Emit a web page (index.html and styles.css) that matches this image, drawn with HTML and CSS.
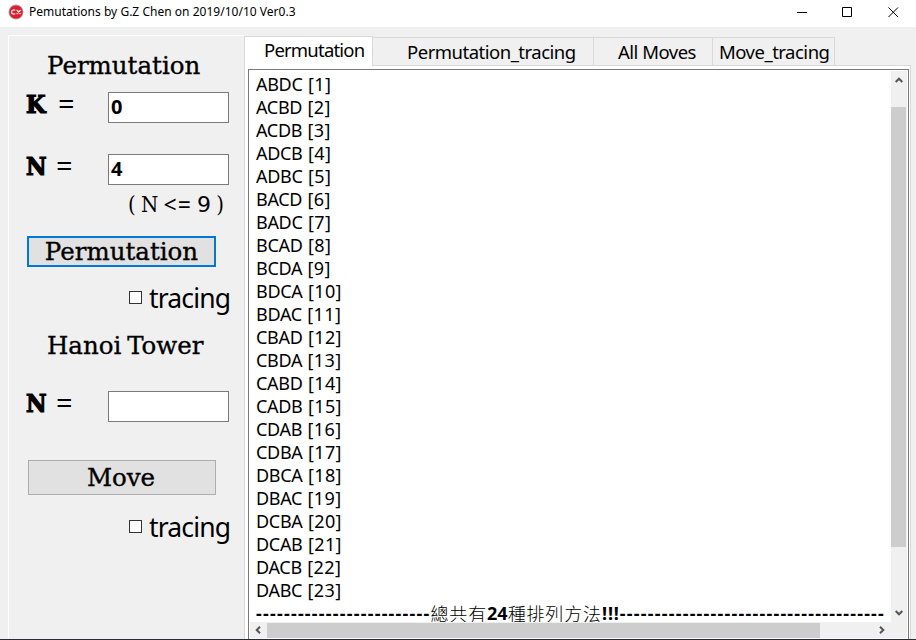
FILE: index.html
```html
<!DOCTYPE html>
<html lang="en">
<head>
<meta charset="utf-8">
<title>Pemutations</title>
<link rel="stylesheet" href="styles.css">
</head>
<body>
<div class="window">
  <header class="titlebar">
    <svg class="logo" width="16" height="16" viewBox="0 0 16 16"><circle cx="8" cy="8" r="7.5" fill="#a9a2a2"/><circle cx="8" cy="8" r="6.6" fill="#df1f2c"/><path d="M7.2 6.4C6.2 5.5 3.6 5.7 3.6 8s2.600 2.500 3.600 1.600M8.700 5.900l4 4.200M12.700 5.900l-4 4.200" fill="none" stroke="#fff" stroke-width="1.200"/></svg>
    <span class="caption">Pemutations by G.Z Chen on 2019/10/10 Ver0.3</span>
    <div class="controls">
      <svg width="11" height="11" viewBox="0 0 11 11"><path d="M1 5.500h10"/></svg>
      <svg width="11" height="11" viewBox="0 0 11 11"><path d="M.5.500h9v9h-9z"/></svg>
      <svg width="11" height="11" viewBox="0 0 11 11"><path d="M.5.500l9.500 9.500M10 .500l-9.500 9.500"/></svg>
    </div>
  </header>
  <main class="client">
    <section class="side">
      <h2 class="script heading">Permutation</h2>
      <label class="field k"><b>K</b><i>=</i><input type="text" value="0"></label>
      <label class="field n"><b>N</b><i>=</i><input type="text" value="4"></label>
      <p class="hint"><span>(</span><span class="hn">N</span><span class="le">&lt;=</span><span class="nine">9</span><span>)</span></p>
      <button class="btn primary"><span class="script">Permutation</span></button>
      <label class="check first"><span class="box"></span><span class="word">tracing</span></label>
      <h2 class="script heading hanoi">Hanoi Tower</h2>
      <label class="field n hn-field"><b>N</b><i>=</i><input type="text"></label>
      <button class="btn move"><span class="script">Move</span></button>
      <label class="check second"><span class="box"></span><span class="word">tracing</span></label>
    </section>
    <section class="tabs">
      <nav class="tabbar">
        <div class="tab active"><span>Permutation</span></div>
        <div class="tab t2"><span>Permutation_tracing</span></div>
        <div class="tab t3"><span>All Moves</span></div>
        <div class="tab t4"><span>Move_tracing</span></div>
      </nav>
      <div class="panel">
        <div class="memo">
          <div class="view">
            <ul class="lines">
              <li>ABDC <span>[1]</span></li><li>ACBD <span>[2]</span></li><li>ACDB <span>[3]</span></li><li>ADCB <span>[4]</span></li>
              <li>ADBC <span>[5]</span></li><li>BACD <span>[6]</span></li><li>BADC <span>[7]</span></li><li>BCAD <span>[8]</span></li>
              <li>BCDA <span>[9]</span></li><li>BDCA <span>[10]</span></li><li>BDAC <span>[11]</span></li><li>CBAD <span>[12]</span></li>
              <li>CBDA <span>[13]</span></li><li>CABD <span>[14]</span></li><li>CADB <span>[15]</span></li><li>CDAB <span>[16]</span></li>
              <li>CDBA <span>[17]</span></li><li>DBCA <span>[18]</span></li><li>DBAC <span>[19]</span></li><li>DCBA <span>[20]</span></li>
              <li>DCAB <span>[21]</span></li><li>DACB <span>[22]</span></li><li>DABC <span>[23]</span></li>
              <li class="total"><span class="dash">-------------------------</span><span class="cjk">總共有</span><b>24</b><span class="cjk">種排列方法</span><b class="bang">!!!</b><span class="dash">--------------------------------------</span></li>
            </ul>
          </div>
          <div class="vbar">
            <svg class="up" width="8" height="6" viewBox="0 0 8 6"><path d="M.7 5L4 1.700 7.300 5"/></svg>
            <div class="vthumb"></div>
            <svg class="down" width="8" height="6" viewBox="0 0 8 6"><path d="M.7 1L4 4.300 7.300 1"/></svg>
          </div>
          <div class="hbar">
            <svg class="left" width="6" height="8" viewBox="0 0 6 8"><path d="M5 .7L1.700 4 5 7.300"/></svg>
            <div class="hthumb"></div>
            <svg class="right" width="6" height="8" viewBox="0 0 6 8"><path d="M1 .7L4.300 4 1 7.300"/></svg>
          </div>
        </div>
      </div>
    </section>
  </main>
</div>
</body>
</html>
```
FILE: styles.css
```css
* { box-sizing: border-box; }
body { margin: 0; background: #f0f0f0; color: #000; font-family: "Noto Sans", sans-serif; overflow: hidden; }
h2, p, ul { margin: 0; padding: 0; }
.window { width: 916px; height: 640px; display: flex; flex-direction: column; border-bottom: 1px solid #252d30; }
.titlebar { height: 27px; flex: none; background: #fff; display: flex; align-items: center; padding: 0 17px 3px 8px; }
.logo { flex: none; }
.caption { margin-left: 5px; font-size: 12px; line-height: 20px; letter-spacing: 0.02px; white-space: nowrap; }
.controls { margin-left: auto; display: flex; gap: 35px; }
.controls svg { fill: none; stroke: #000; stroke-width: 1; }
.client { flex: 1; min-height: 0; display: flex; padding: 8px 5px 0 8px; }

.side { width: 236px; flex: none; border-top: 1px solid #fff; border-left: 1px solid #fff; padding-top: 15px; display: flex; flex-direction: column; }
.script { font-family: "DejaVu Serif", serif; font-weight: 400; font-size: 24.5px; line-height: 30px; white-space: nowrap; -webkit-text-stroke: 0.35px #000; }
.heading { margin-left: 38px; height: 30px; }
.field { display: flex; margin-left: 17px; height: 31px; align-items: flex-start; }
.field b { width: 33px; flex: none; font: 700 25px/25px "DejaVu Serif Condensed", "DejaVu Serif", serif; font-stretch: condensed; -webkit-text-stroke: 1.2px #000; }
.field i { width: 50px; flex: none; font-style: normal; font-size: 29px; line-height: 21px; margin-left: -1px; }
.n i { margin-left: -3px; width: 52px; }
.field input { width: 121px; height: 31px; margin: 0; padding: 0 3px 3px 2px; border: 1px solid #7a7a7a; background: #fff; font: 700 20px "Noto Sans", sans-serif; outline: 0; }
.k { margin-top: 11px; }
.n { margin-top: 31px; }
.hint { margin: 7px 0 0 119px; height: 26px; width: 96px; display: flex; justify-content: space-between; font: 22px/25px "DejaVu Serif Condensed", "DejaVu Serif", serif; }
.hint .le { font-family: "Noto Sans", sans-serif; font-size: 23px; letter-spacing: 1px; }
.hint .nine { font-family: "DejaVu Sans", sans-serif; }
.btn { display: flex; justify-content: center; align-items: center; padding: 0; border: 1px solid #adadad; background: #e1e1e1; color: #000; }
.primary { margin: 18px 0 0 18px; width: 189px; height: 31px; border: 2px solid #0078d7; }
.check { display: flex; align-items: center; margin-left: 120px; height: 34px; }
.first { margin-top: 14px; }
.box { width: 13px; height: 13px; border: 1px solid #333; background: #fff; margin: -2px 7px 0 0; }
.word { font-size: 26.5px; line-height: 34px; letter-spacing: -0.85px; }
.hanoi { margin-top: 16px; word-spacing: -2px; }
.hn-field { margin-top: 30px; }
.move { margin: 38px 0 0 19px; width: 188px; height: 35px; padding-right: 2px; }
.second { margin-top: 15px; }

.tabs { width: 667px; display: flex; flex-direction: column; }
.tabbar { display: flex; align-items: flex-end; height: 30px; position: relative; z-index: 1; flex: none; }
.tab { height: 28px; border: 1px solid #d9d9d9; border-left: 0; border-bottom: 0; font-size: 18.5px; line-height: 27px; letter-spacing: -0.5px; text-align: left; white-space: nowrap; }
.tab.active { width: 129px; height: 30px; background: #fff; border-left: 1px solid #d9d9d9; padding-left: 19px; margin-bottom: -1px; line-height: 26px; letter-spacing: -0.8px; }
.t2 { width: 221px; padding-left: 34px; }
.t3 { width: 119px; padding-left: 24px; }
.t4 { width: 122px; padding-left: 6px; }
.panel { flex: 1; min-height: 0; border: 1px solid #d9d9d9; border-bottom: 0; background: #fff; padding: 3px 1px 0 3px; }
.memo { width: 661px; height: 570px; border: 1px solid #7a7a7a; border-bottom: 0; display: grid; grid-template: 552px 17px / 642px 17px; padding: 0; }
.view { overflow: hidden; padding: 3px 4px 0 7px; }
.lines { list-style: none; font-size: 18px; line-height: 23px; white-space: nowrap; }
.lines li { height: 23px; letter-spacing: -0.3px; }
.lines li:not(.total) span { letter-spacing: 0.4px; margin-left: 1px; }
.lines .total { display: flex; font-weight: 700; line-height: 22px; }
.total b { font-weight: 700; letter-spacing: 0; }
.total .bang { letter-spacing: 0.9px; }
.dash { letter-spacing: 1.22px; }
.cjk { font-family: "Noto Sans CJK TC", sans-serif; font-weight: 300; letter-spacing: 0.85px; }
.vbar { background: #f0f0f0; margin: 1px 1px 0 0; display: flex; flex-direction: column; align-items: center; }
.vbar svg, .hbar svg { flex: none; fill: none; stroke: #555; stroke-width: 2; }
.up { margin-top: 6px; }
.vthumb { margin-top: 24px; width: 15px; height: 440px; background: #cdcdcd; align-self: flex-start; }
.down { margin-top: 63px; }
.hbar { grid-column: 1 / 3; background: #f0f0f0; display: flex; align-items: center; margin: 0 1px 1px; }
.left { margin-left: 5px; }
.hthumb { width: 553px; height: 15px; margin-left: 6px; background: #cdcdcd; }
.right { margin-left: 59px; }
```
